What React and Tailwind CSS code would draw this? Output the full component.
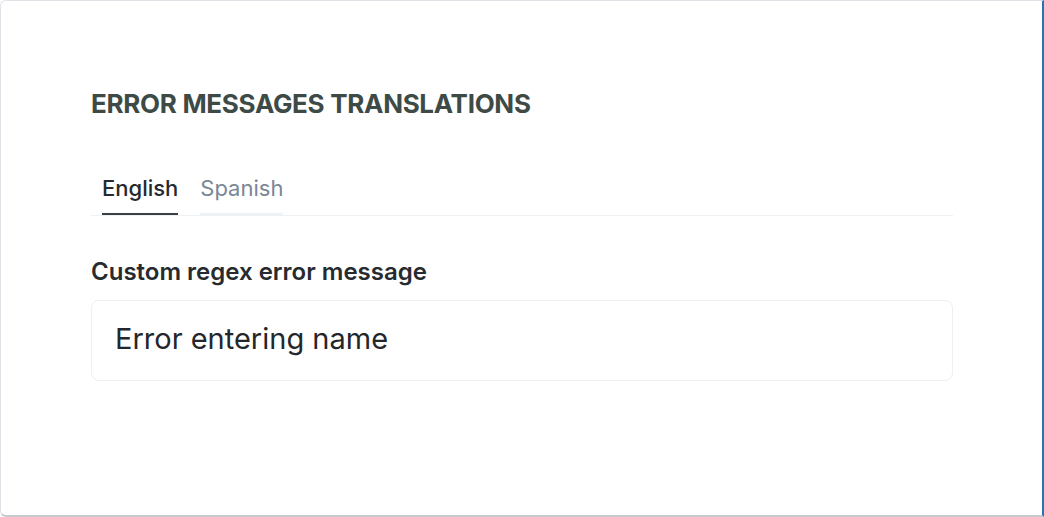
export default function App() {
  return (
    <div className="w-[1044px] h-[517px] bg-white" style={{ fontFamily: "Inter, 'Noto Sans', sans-serif" }}>
      <div className="h-full w-full rounded-l-md border-t border-l border-[#dfe3e8] border-b-2 border-b-[#c6c9cd] border-r-2 border-r-[#2f6fb5] bg-white pl-[90px] pr-[89px] pt-[88px]">
        <h2 className="text-[26px] leading-[30px] font-bold text-[#3d4a46] tracking-[-0.3px]">ERROR MESSAGES TRANSLATIONS</h2>
        <div className="mt-[55px] flex border-b border-[#eef1f4] pl-[11px] gap-[22px]">
          <div className="border-b-2 border-[#3a3f45] pb-[11px] text-[22px] leading-[28px] font-medium text-[#252a30]">English</div>
          <div className="border-b-2 border-[#eef2f6] pb-[11px] text-[22px] leading-[28px] text-[#7a8794]">Spanish</div>
        </div>
        <div className="mt-[41px] text-[24px] leading-[30px] font-semibold text-[#272b30]">Custom regex error message</div>
        <div className="mt-[13px] h-[81px] rounded-lg border border-[#eeeff1] flex items-center pl-[23px] pb-[3px] text-[29px] text-[#23272c]">
          Error entering name
        </div>
      </div>
    </div>
  );
}
